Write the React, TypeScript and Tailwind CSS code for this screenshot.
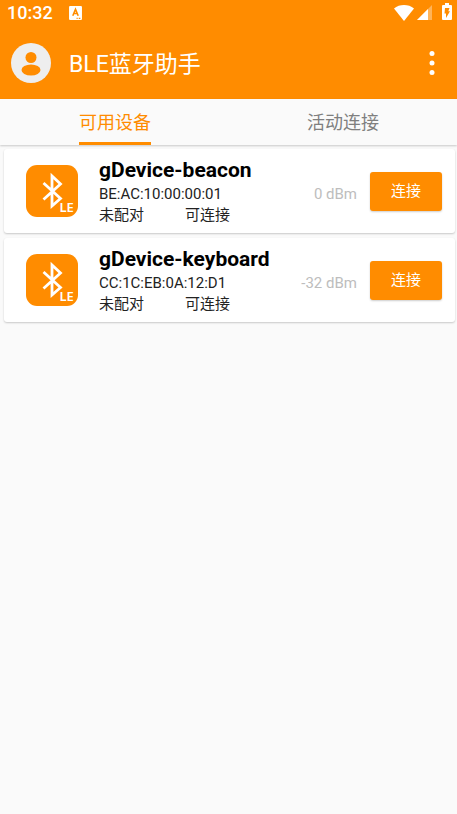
import { useState } from 'react';
import clsx from 'clsx';

type Device = { name: string; mac: string; bond: string; state: string; rssi: number };

const devices: Device[] = [
  { name: 'gDevice-beacon', mac: 'BE:AC:10:00:00:01', bond: '未配对', state: '可连接', rssi: 0 },
  { name: 'gDevice-keyboard', mac: 'CC:1C:EB:0A:12:D1', bond: '未配对', state: '可连接', rssi: -32 },
];

const tabs = ['可用设备', '活动连接'];

function StatusBar() {
  return (
    <div className="flex h-[26px] items-center pl-[7px] pr-[5px] text-white">
      <span className="text-[18px] leading-[26px] font-medium">10:32</span>
      <svg className="ml-4" width="13" height="14" viewBox="0 0 12 13" aria-hidden="true">
        <rect width="12" height="13" rx="1" fill="#fff" />
        <path d="M3.500 9 6 3l2.500 6M4.400 7h3.200" fill="none" stroke="#ff8c00" strokeWidth="1.500" />
        <path d="M7 11.500h1M9 11.500h1.500" stroke="#ff8c00" />
      </svg>
      <svg className="ml-auto" width="20" height="16" viewBox="0 0 20 16" aria-hidden="true">
        <path d="M0 3.500C5.500-1.100 14.500-1.100 20 3.500L10 16z" fill="#fff" />
      </svg>
      <svg className="mb-px ml-[3px]" width="15" height="15" viewBox="0 0 15 15" aria-hidden="true">
        <path d="M15 0v15H0z" fill="#fff" fillOpacity=".35" />
        <path d="M11 4v11H0z" fill="#fff" />
      </svg>
      <svg className="mb-[3px] ml-[10px]" width="10" height="17" viewBox="0 0 10 17" aria-hidden="true">
        <path d="M3 0h4v2h2q1 0 1 1v13q0 1-1 1H1q-1 0-1-1V3q0-1 1-1h2z" fill="#fff" />
        <path d="M3 5h4.500L6.300 8.300H8L4 15v-4.500H2.500z" fill="#ff8c00" />
      </svg>
    </div>
  );
}

function BleIcon() {
  return (
    <svg className="size-[52px] shrink-0" viewBox="0 0 52 52" aria-hidden="true">
      <rect width="52" height="52" rx="11" fill="#ff8c00" />
      <path d="M17.500 18 34.500 33.500 26 41V11L34.500 19 17.500 34.500" fill="none" stroke="#fff" strokeWidth="2.800" />
      <text x="33.500" y="46.500" fill="#fff" fontSize="13" fontWeight="600" fontFamily="'Noto Sans', sans-serif">LE</text>
    </svg>
  );
}

function DeviceCard({ device }: { device: Device }) {
  return (
    <li className="flex h-[84px] items-center rounded-[3px] bg-white pr-[13px] pl-[22px] shadow-[0_1px_2px_rgba(0,0,0,0.2)]">
      <BleIcon />
      <div className="ml-[21px] min-w-0 flex-1 text-[15px] leading-[20px] text-[#222]">
        <h2 className="text-[21px] leading-[26px] font-bold whitespace-nowrap text-black">{device.name}</h2>
        <div className="flex items-center leading-[22px]">
          <span className="flex-1">{device.mac}</span>
          <span className="text-[#bdbdbd]">{device.rssi} dBm</span>
        </div>
        <div className="flex gap-[41px]">
          <span>{device.bond}</span>
          <span>{device.state}</span>
        </div>
      </div>
      <button type="button" className="ml-[13px] h-[39px] w-[72px] rounded-[3px] bg-[#ff8c00] text-[15px] text-white shadow-[0_1px_2px_rgba(0,0,0,0.2)]">
        连接
      </button>
    </li>
  );
}

export default function App() {
  const [tab, setTab] = useState(0);
  return (
    <div className="min-h-screen bg-[#fafafa] font-[Roboto,'Noto_Sans_CJK_SC',sans-serif]">
      <header className="bg-[#ff8c00]">
        <StatusBar />
        <div className="flex h-[73px] items-center pl-[11px] pr-[15px] text-white">
          <button type="button" aria-label="账户">
            <svg className="size-[40px]" viewBox="0 0 40 40" aria-hidden="true">
              <circle cx="20" cy="20" r="20" fill="#eee" />
              <circle cx="20" cy="14.500" r="5.500" fill="#ff8c00" />
              <ellipse cx="20" cy="27" rx="9.500" ry="5.500" fill="#ff8c00" />
            </svg>
          </button>
          <h1 className="ml-[18px] flex-1 pt-1 text-[23px] leading-[32px]">BLE蓝牙助手</h1>
          <button type="button" aria-label="更多">
            <svg width="20" height="26" viewBox="0 0 20 26" fill="#fff" aria-hidden="true">
              <circle cx="10" cy="3.500" r="2.500" />
              <circle cx="10" cy="13" r="2.500" />
              <circle cx="10" cy="22.500" r="2.500" />
            </svg>
          </button>
        </div>
      </header>
      <nav className="grid h-[46px] grid-cols-2 pl-px shadow-[0_1px_2px_rgba(0,0,0,0.2)]">
        {tabs.map((t, i) => (
          <button key={t} type="button" onClick={() => setTab(i)} className="flex justify-center">
            <span
              className={clsx(
                'h-[46px] border-b-[3px] text-[18px] leading-[48px]',
                i === tab ? 'border-[#ff8c00] text-[#ff8c00]' : 'border-transparent text-[#7f7f7f]',
              )}
            >
              {t}
            </span>
          </button>
        ))}
      </nav>
      <main className="pt-[4px] pr-[2px] pl-[4px]">
        <ul className="flex flex-col gap-[5px]">
          {devices.map((d) => (
            <DeviceCard key={d.mac} device={d} />
          ))}
        </ul>
      </main>
    </div>
  );
}
